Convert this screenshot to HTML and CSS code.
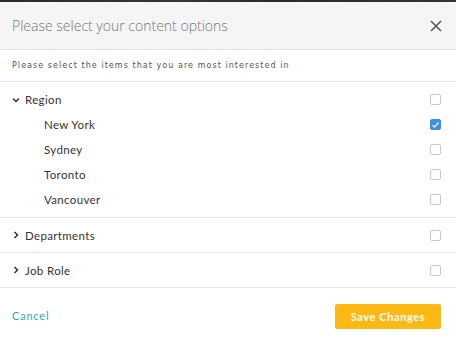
FILE: index.html
```html
<!DOCTYPE html>
<html lang="en">
<head>
  <meta charset="UTF-8">
  <title>Content options</title>
  <link rel="stylesheet" href="styles.css">
</head>
<body>
  <div class="backdrop"></div>
  <div class="modal">
    <header class="modal-header">
      <h1>Please select your content options</h1>
      <button class="close" aria-label="Close">
        <svg width="12" height="12" viewBox="0 0 12 12"><path d="M1 1L11 11M11 1L1 11" stroke="#555" stroke-width="1.6" fill="none"/></svg>
      </button>
    </header>
    <p class="intro">Please select the items that you are most interested in</p>

    <section class="group open">
      <div class="row">
        <span class="chev down"><svg width="8" height="6" viewBox="0 0 8 6"><path d="M1 1.5L4 4.5L7 1.5" stroke="#333" stroke-width="1.5" fill="none"/></svg></span>
        <span class="label">Region</span>
        <span class="check"></span>
      </div>
      <div class="row sub">
        <span class="label">New York</span>
        <span class="check on"><svg width="9" height="8" viewBox="0 0 9 8"><path d="M1.5 4.2L3.5 6.2L7.5 1.5" stroke="#fff" stroke-width="1.2" fill="none"/></svg></span>
      </div>
      <div class="row sub">
        <span class="label">Sydney</span>
        <span class="check"></span>
      </div>
      <div class="row sub">
        <span class="label">Toronto</span>
        <span class="check"></span>
      </div>
      <div class="row sub">
        <span class="label">Vancouver</span>
        <span class="check"></span>
      </div>
    </section>

    <section class="group">
      <div class="row">
        <span class="chev"><svg width="8" height="8" viewBox="0 0 8 8"><path d="M2.5 1L5.5 4L2.5 7" stroke="#333" stroke-width="1.5" fill="none"/></svg></span>
        <span class="label">Departments</span>
        <span class="check"></span>
      </div>
    </section>

    <section class="group">
      <div class="row">
        <span class="chev"><svg width="8" height="8" viewBox="0 0 8 8"><path d="M2.5 1L5.5 4L2.5 7" stroke="#333" stroke-width="1.5" fill="none"/></svg></span>
        <span class="label">Job Role</span>
        <span class="check"></span>
      </div>
    </section>

    <footer class="modal-footer">
      <a href="#" class="cancel">Cancel</a>
      <button class="save">Save Changes</button>
    </footer>
  </div>
</body>
</html>
```

FILE: styles.css
```css
body {
  margin: 0;
  background-color: #fff;
  font-family: 'Lato', sans-serif;
  color: #333;
}
.backdrop {
  height: 2px;
  background: linear-gradient(90deg, #2b2b2b, #3a3430 40%, #2e2a28 60%, #333 100%);
}
.modal {
  width: 456px;
  background-color: #fff;
}
.modal-header {
  display: flex;
  align-items: center;
  justify-content: space-between;
  height: 47px;
  padding: 0 14px 0 12px;
  background-color: #f5f5f5;
  border-bottom: 1px solid #e3e3e3;
}
.modal-header h1 {
  margin: 0;
  font-family: 'Open Sans', sans-serif;
  font-weight: 300;
  font-size: 14px;
  color: #777;
}
.close {
  border: none;
  background: none;
  padding: 0;
  display: flex;
  cursor: pointer;
}
.intro {
  margin: 0;
  height: 31px;
  line-height: 31px;
  padding-left: 12px;
  font-family: 'DejaVu Sans', sans-serif;
  font-size: 8px;
  letter-spacing: 1.05px;
  color: #555;
  border-bottom: 1px solid #e6e6e6;
}
.group {
  border-bottom: 1px solid #e6e6e6;
}
.group.open {
  padding: 5px 0;
}
.row {
  display: flex;
  align-items: center;
  height: 34px;
  padding: 0 15px 0 12px;
  font-size: 11.5px;
  letter-spacing: 0.35px;
}
.open .row {
  height: 25px;
}
.row.sub {
  padding-left: 44px;
}
.chev {
  display: flex;
  width: 13px;
}
.label {
  flex: 1;
}
.check {
  box-sizing: border-box;
  width: 11px;
  height: 11px;
  border: 1px solid #c8c8c8;
  border-radius: 2px;
  display: flex;
  align-items: center;
  justify-content: center;
}
.check.on {
  background-color: #3a8ef0;
  border-color: #3a8ef0;
}
.modal-footer {
  display: flex;
  align-items: center;
  justify-content: space-between;
  padding: 16px 15px 0 12px;
}
.cancel {
  color: #35aaa5;
  text-decoration: none;
  font-size: 11px;
  letter-spacing: 0.8px;
  margin-top: -2px;
}
.save {
  width: 106px;
  height: 25px;
  border: none;
  border-radius: 2px;
  background-color: #fdb913;
  color: #fff;
  font-family: 'Lato', sans-serif;
  font-weight: 700;
  font-size: 11px;
  letter-spacing: 0.6px;
  cursor: pointer;
}
```
